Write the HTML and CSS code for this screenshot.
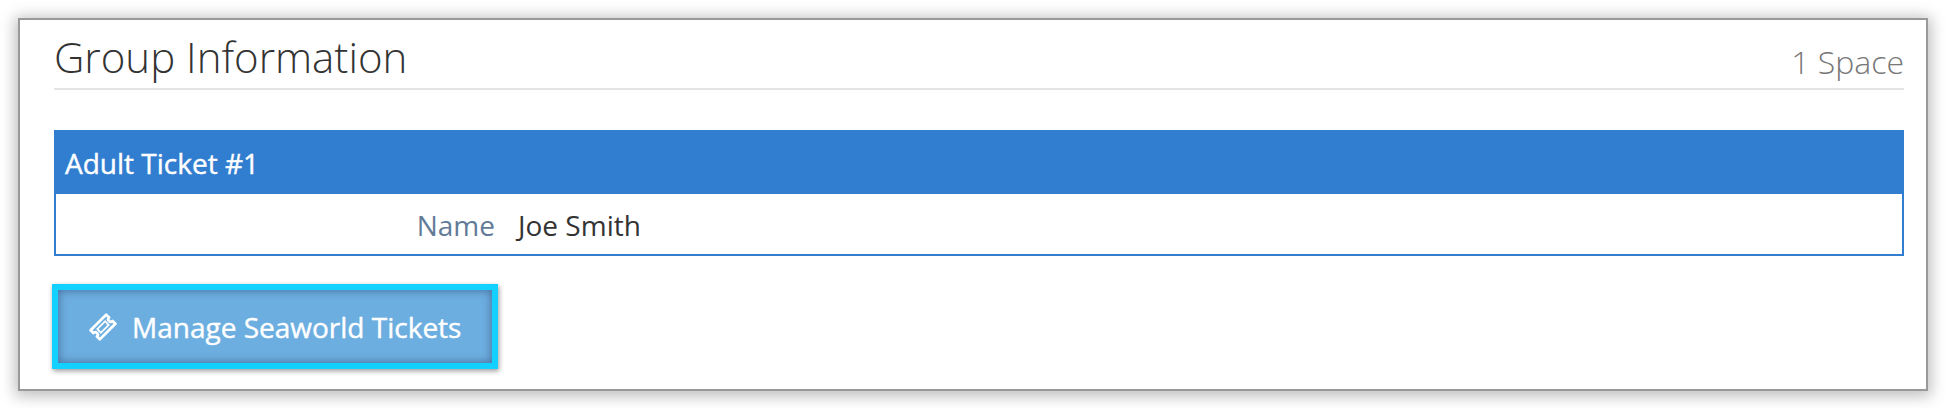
FILE: index.html

```html
<!DOCTYPE html>
<html lang="en">
<head>
    <meta charset="UTF-8">
    <title>Group Information</title>
    <link rel="stylesheet" href="styles.css">
</head>
<body>
    <div class="panel">
        <div class="panel-head">
            <h2>Group Information</h2>
            <span class="spaces">1 Space</span>
        </div>

        <div class="ticket">
            <div class="ticket-title">Adult Ticket #1</div>
            <div class="ticket-row">
                <span class="ticket-label">Name</span>
                <span class="ticket-value">Joe Smith</span>
            </div>
        </div>

        <a class="manage-btn" href="#">
            <svg class="ticket-icon" width="28" height="28" viewBox="0 0 28 28" fill="none" stroke="#fff">
                <g transform="rotate(-45 14 14)">
                    <path stroke-width="2.8" stroke-linejoin="round" d="M3 7.5h22v4a2.5 2.5 0 0 0 0 5v4h-22v-4a2.5 2.5 0 0 0 0-5z"/>
                    <rect x="8.5" y="11.5" width="11" height="5" stroke-width="1.8"/>
                </g>
            </svg>
            Manage Seaworld Tickets
        </a>
    </div>
</body>
</html>
```

FILE: styles.css

```css
* {
    box-sizing: border-box;
    margin: 0;
    padding: 0;
    font-family: 'Open Sans', sans-serif;
}
body {
    background-color: #fff;
    padding: 18px;
    height: 408px;
    overflow: hidden;
}
.panel {
    background: #fff;
    border: 2px solid #999;
    box-shadow: 0 2px 14px 3px rgba(0, 0, 0, 0.26);
    width: 1910px;
    height: 373px;
    padding: 0 22px 0 34px;
}
.panel-head {
    display: flex;
    justify-content: space-between;
    align-items: flex-end;
    height: 70px;
    border-bottom: 2px solid #e4e4e4;
    padding-bottom: 3px;
}
h2 {
    font-size: 42px;
    font-weight: 300;
    color: #333;
    line-height: 56px;
}
.spaces {
    font-size: 32px;
    font-weight: 300;
    color: #777;
    line-height: 40px;
    padding-bottom: 3px;
}
.ticket {
    margin-top: 40px;
    border: 2px solid #317dcf;
    border-top: 0;
}
.ticket-title {
    background-color: #317dcf;
    color: #fff;
    font-size: 28px;
    font-weight: 500;
    -webkit-text-stroke: 0.4px #fff;
    height: 64px;
    line-height: 66px;
    margin: 0 -2px;
    padding: 0 11px;
}
.ticket-row {
    display: flex;
    height: 60px;
    align-items: center;
    font-size: 28px;
    padding-top: 2px;
}
.ticket-label {
    width: 439px;
    text-align: right;
    color: #627b98;
}
.ticket-value {
    margin-left: 23px;
    color: #333;
}
.manage-btn {
    display: flex;
    align-items: center;
    gap: 15px;
    margin: 28px 0 0 -2px;
    width: 446px;
    height: 85px;
    padding-left: 31px;
    background-color: #6daee0;
    border: 6px solid #12d0ff;
    box-shadow: inset 0 0 8px 1px rgba(40, 70, 110, 0.55), 1px 2px 5px rgba(0, 0, 0, 0.4);
    color: #fff;
    font-size: 28px;
    font-weight: 500;
    -webkit-text-stroke: 0.4px #fff;
    text-decoration: none;
}
```
